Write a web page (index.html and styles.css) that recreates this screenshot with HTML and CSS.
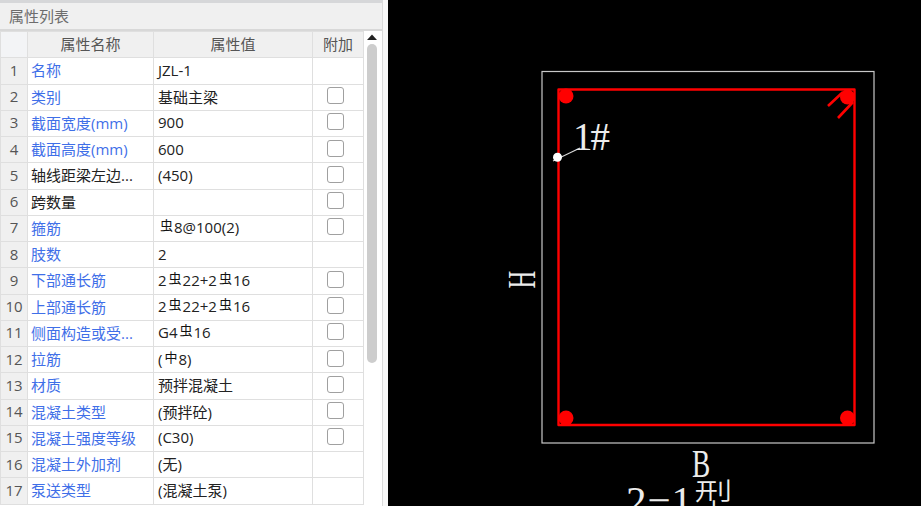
FILE: index.html
```html
<!DOCTYPE html>
<html>
<head>
  <title>属性列表</title>
  <meta charset="utf-8">
  <link rel="stylesheet" href="styles.css">
</head>
<body>
  <div class="page">
    <div class="panel">
      <div class="panel-title">属性列表</div>
      <div class="grid-wrap">
        <table class="props">
          <thead>
            <tr><th class="idx"></th><th class="name">属性名称</th><th class="value">属性值</th><th class="extra">附加</th></tr>
          </thead>
          <tbody>
            <tr><td class="idx">1</td><td class="name">名称</td><td>JZL-1</td><td></td></tr>
            <tr><td class="idx">2</td><td class="name">类别</td><td>基础主梁</td><td><span class="check"></span></td></tr>
            <tr><td class="idx">3</td><td class="name">截面宽度(mm)</td><td>900</td><td><span class="check"></span></td></tr>
            <tr><td class="idx">4</td><td class="name">截面高度(mm)</td><td>600</td><td><span class="check"></span></td></tr>
            <tr><td class="idx">5</td><td class="name dark">轴线距梁左边...</td><td>(450)</td><td><span class="check"></span></td></tr>
            <tr><td class="idx">6</td><td class="name dark">跨数量</td><td></td><td><span class="check"></span></td></tr>
            <tr><td class="idx">7</td><td class="name">箍筋</td><td><span class="bar">虫</span>8@100(2)</td><td><span class="check"></span></td></tr>
            <tr><td class="idx">8</td><td class="name">肢数</td><td>2</td><td></td></tr>
            <tr><td class="idx">9</td><td class="name">下部通长筋</td><td>2<span class="bar">虫</span>22+2<span class="bar">虫</span>16</td><td><span class="check"></span></td></tr>
            <tr><td class="idx">10</td><td class="name">上部通长筋</td><td>2<span class="bar">虫</span>22+2<span class="bar">虫</span>16</td><td><span class="check"></span></td></tr>
            <tr><td class="idx">11</td><td class="name">侧面构造或受...</td><td>G4<span class="bar">虫</span>16</td><td><span class="check"></span></td></tr>
            <tr><td class="idx">12</td><td class="name">拉筋</td><td>(<span class="bar">中</span>8)</td><td><span class="check"></span></td></tr>
            <tr><td class="idx">13</td><td class="name">材质</td><td>预拌混凝土</td><td><span class="check"></span></td></tr>
            <tr><td class="idx">14</td><td class="name">混凝土类型</td><td>(预拌砼)</td><td><span class="check"></span></td></tr>
            <tr><td class="idx">15</td><td class="name">混凝土强度等级</td><td>(C30)</td><td><span class="check"></span></td></tr>
            <tr><td class="idx">16</td><td class="name">混凝土外加剂</td><td>(无)</td><td></td></tr>
            <tr><td class="idx">17</td><td class="name">泵送类型</td><td>(混凝土泵)</td><td></td></tr>
          </tbody>
        </table>
        <div class="scrollbar">
          <svg class="arrow" width="12" height="6" viewBox="0 0 12 6"><path d="M1 6 L6 0.5 L11 6 Z" fill="#222"/></svg>
          <div class="thumb"></div>
        </div>
      </div>
    </div>
    <div class="gap"></div>
    <div class="canvas">
      <svg class="section" width="533" height="506" viewBox="388 0 533 506">
        <rect x="542" y="71.5" width="332" height="371.5" fill="none" stroke="#c8c8c8" stroke-width="1.2"/>
        <rect x="558.5" y="89.5" width="296" height="335.5" fill="none" stroke="#ff0000" stroke-width="2.4" stroke-linejoin="round"/>
        <circle cx="566" cy="96" r="7.5" fill="#ff0000"/>
        <circle cx="847.5" cy="97" r="7.5" fill="#ff0000"/>
        <circle cx="566" cy="418" r="7.5" fill="#ff0000"/>
        <circle cx="847.5" cy="418" r="7.5" fill="#ff0000"/>
        <path d="M828 106 L843 92 M838 118 L853 102" fill="none" stroke="#ff0000" stroke-width="2.6"/>
        <path d="M553 161 L580 148" fill="none" stroke="#d8d8d8" stroke-width="1.1"/>
        <circle cx="557.5" cy="157.3" r="4.5" fill="#fff"/>
      </svg>
      <div class="label tag">1#</div>
      <div class="label dim-h">H</div>
      <div class="label dim-b">B</div>
      <div class="label caption">2−1型</div>
    </div>
  </div>
</body>
</html>
```
FILE: styles.css
```css
html, body { margin: 0; padding: 0; height: 100%; overflow: hidden; }
body { font-family: "Open Sans", "Noto Sans CJK SC", sans-serif; background-color: #000; }

.page { display: flex; width: 921px; height: 506px; overflow: hidden; }
.panel { flex: none; width: 382px; background-color: #fff; border-top: 3px solid #d6d7d9; border-right: 1px solid #dadada; }
.gap { width: 5px; flex: none; background-color: #f8f8f8; }
.canvas { flex: 1; position: relative; background-color: #000; overflow: hidden; }

.panel-title { height: 26px; line-height: 26px; padding-left: 9px; font-size: 15px; color: #6d6d6d; background-color: #f0f0f0; border-bottom: 2px solid #d8d8d8; }

.grid-wrap { display: flex; }
.props { width: 364px; flex: none; border-collapse: collapse; table-layout: fixed; font-size: 15px; }
.props th, .props td { height: 26.25px; padding: 0 0 2px; border: 1px solid #dfdfdf; box-sizing: border-box; }
.props th { background-color: #f0f0f0; font-weight: normal; color: #555; text-align: center; }
.props td { padding-left: 4px; color: #222; white-space: nowrap; overflow: hidden; }
.props td:last-child { text-align: center; padding-left: 0; }
.props th.idx { width: 27px; background-color: #f3f4f6; }
.props th.name { width: 126px; }
.props th.value { width: 159px; }
.props td.idx { background-color: #f0f0f0; color: #555; text-align: center; padding-left: 0; }
.props td.name { color: #3f6fe8; padding-left: 3px; }
.props td.dark { color: #222; }

.bar { font-size: 13px; position: relative; top: -3px; margin: 0 1px 0 2px; color: #111; }
.check { display: block; width: 15px; height: 15px; margin: -1px 0 0 14px; border: 1px solid #a0a0a0; border-radius: 3px; background-color: #fff; }

.scrollbar { width: 18px; flex: none; display: flex; flex-direction: column; align-items: center; padding-top: 3px; box-sizing: border-box; }
.arrow { display: block; margin-right: 2px; }
.thumb { width: 10px; height: 319px; margin-top: 4px; margin-right: 2px; background-color: #cdcdcd; border-radius: 5px; }

.section { position: absolute; left: 0; top: 0; }
.label { position: absolute; font-family: "Liberation Serif", "Noto Sans CJK SC", serif; color: #ececec; line-height: 1; white-space: nowrap; }
.tag { left: 185px; top: 117px; font-size: 39px; letter-spacing: -2px; }
.dim-h { left: 119px; top: 259px; font-size: 41px; transform: rotate(-90deg) scaleX(.6); }
.dim-b { left: 304px; top: 444px; font-size: 39px; transform: scaleX(.7); transform-origin: left top; }
.caption { left: 238px; top: 480px; font-size: 41px; letter-spacing: 1px; font-weight: 300; }
```
